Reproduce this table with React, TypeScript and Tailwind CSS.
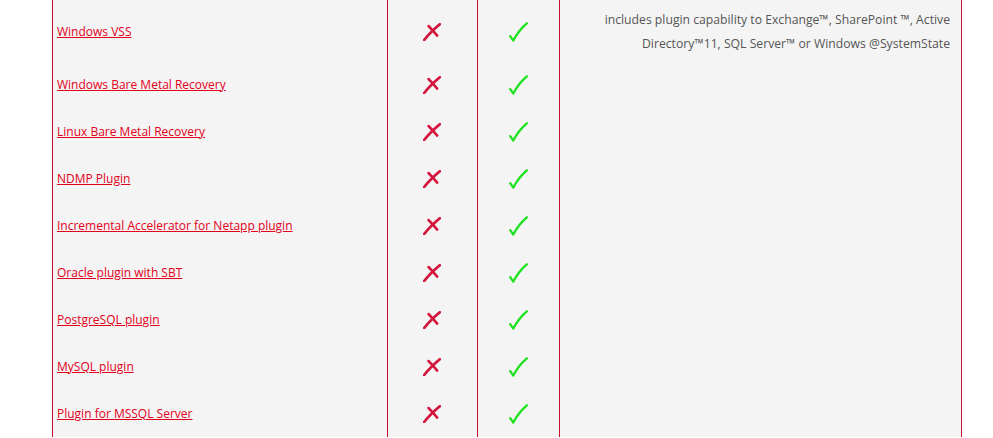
const rows = [
  "Windows VSS",
  "Windows Bare Metal Recovery",
  "Linux Bare Metal Recovery",
  "NDMP Plugin",
  "Incremental Accelerator for Netapp plugin",
  "Oracle plugin with SBT",
  "PostgreSQL plugin",
  "MySQL plugin",
  "Plugin for MSSQL Server",
];

function Cross() {
  return (
    <svg width="18" height="18" viewBox="0 0 18 18" className="-ml-[2px]">
      <path d="M1.2 17 Q7 9.5 16.8 1.3" stroke="#d4163c" strokeWidth="2.8" fill="none" strokeLinecap="round" />
      <path d="M5.5 3 Q9.5 7 14.2 12.6" stroke="#d4163c" strokeWidth="2.5" fill="none" strokeLinecap="round" />
    </svg>
  );
}

function Check() {
  return (
    <svg width="19" height="20" viewBox="0 0 19 20">
      <path d="M1.2 14.2 L4.3 18.6 Q9 9 17.8 1.3" stroke="#1ee21e" strokeWidth="2.3" fill="none" strokeLinecap="round" strokeLinejoin="round" />
    </svg>
  );
}

export default function App() {
  return (
    <div className="w-[993px] h-[438px] overflow-hidden bg-white font-['Open_Sans',sans-serif]">
      <div className="ml-[52px] w-[910px] grid grid-cols-[336px_90px_82px_402px] bg-[#f4f4f4]">
        {rows.map((name, i) => {
          const pad = i === 0 ? "h-[61px] pt-[2px]" : "h-[47px]";
          return (
            <div key={name} className="contents">
              <div className={`flex items-center pl-[4px] border-l border-r border-[#c8102e] ${pad}`}>
                <a href="#" className="text-[12px] text-[#e2001a] underline">
                  {name}
                </a>
              </div>
              <div className={`flex items-center justify-center border-r border-[#c8102e] ${pad}`}>
                <Cross />
              </div>
              <div className={`flex items-center justify-center border-r border-[#c8102e] ${pad}`}>
                <Check />
              </div>
              <div className={`flex items-center justify-end pr-[11px] border-r border-[#c8102e] ${pad}`}>
                {i === 0 && (
                  <p className="text-right text-[12.2px] leading-[24px] text-[#555555]">
                    includes plugin capability to Exchange™, SharePoint ™, Active
                    <br />
                    Directory™11, SQL Server™ or Windows @SystemState
                  </p>
                )}
              </div>
            </div>
          );
        })}
      </div>
    </div>
  );
}
